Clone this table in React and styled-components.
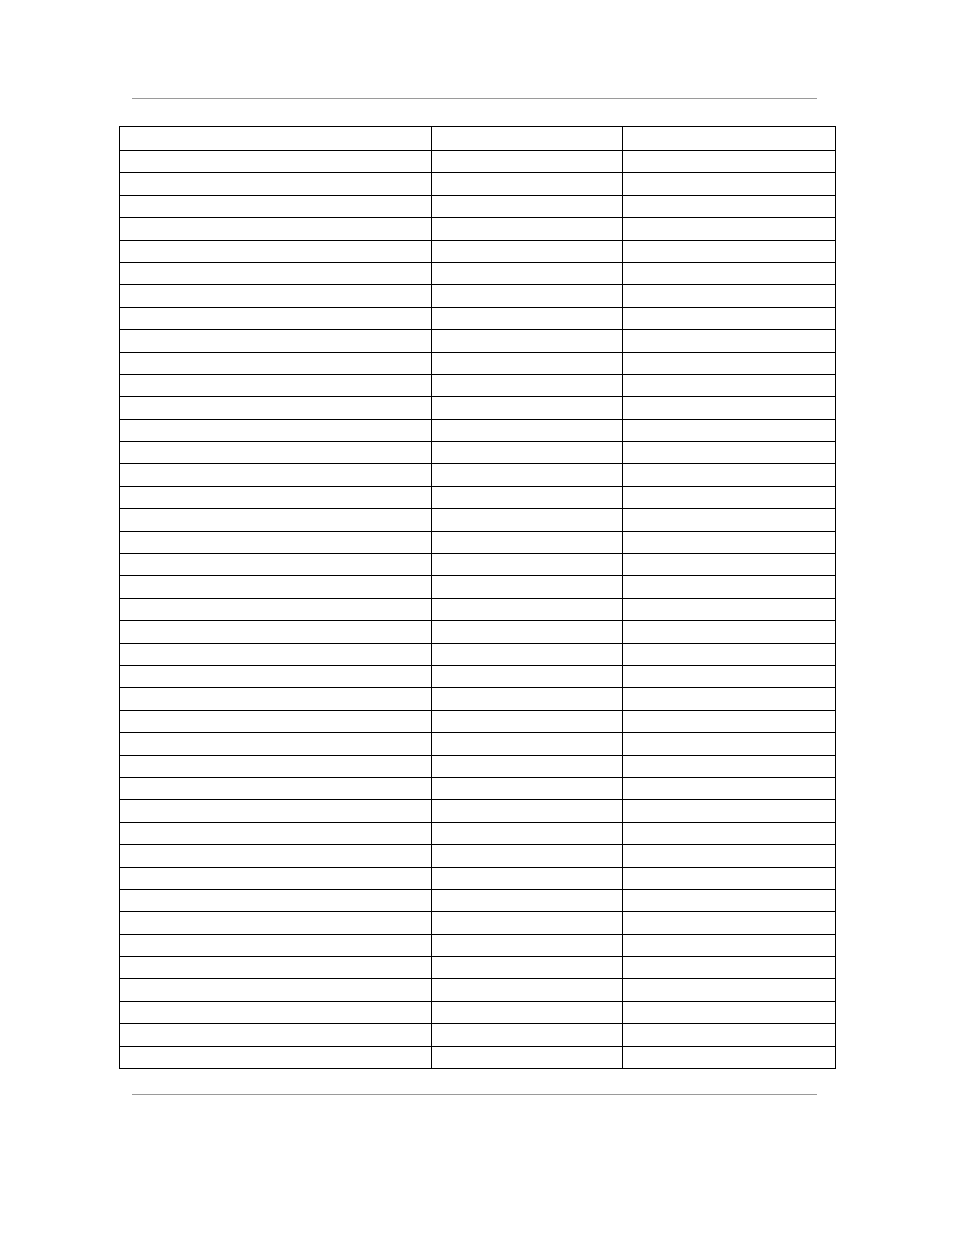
import React from "react";
import styled, { createGlobalStyle } from "styled-components";

const Global = createGlobalStyle`
  html, body { margin: 0; padding: 0; background: #fff; }
  body { font-family: "Liberation Sans", Arial, sans-serif; }
`;

const Page = styled.div`
  width: 954px;
  height: 1235px;
  padding-top: 98px;
  box-sizing: border-box;
`;

const Rule = styled.div`
  margin: 0 0 0 132px;
  width: 685px;
  height: 1px;
  background: #9a9a9a;
`;

const Table = styled.div`
  margin: 27px 0 25px 119px;
  width: 717px;
  border: 1px solid #000;
  box-sizing: border-box;
  display: flex;
  flex-direction: column;
`;

const Row = styled.div`
  display: grid;
  grid-template-columns: 312px 191px 1fr;
  height: ${(p) => (p.$head ? "23px" : "22.4px")};
  box-sizing: border-box;
  border-top: ${(p) => (p.$head ? "none" : "1px solid #000")};
`;

const Cell = styled.div`
  border-right: ${(p) => (p.$last ? "none" : "1px solid #000")};
  font-size: 12px;
`;

const rows = Array.from({ length: 42 }, (_, i) => i);

export default function App() {
  return (
    <>
      <Global />
      <Page>
        <Rule />
        <Table>
          {rows.map((i) => (
            <Row key={i} $head={i === 0}>
              <Cell />
              <Cell />
              <Cell $last />
            </Row>
          ))}
        </Table>
        <Rule />
      </Page>
    </>
  );
}
